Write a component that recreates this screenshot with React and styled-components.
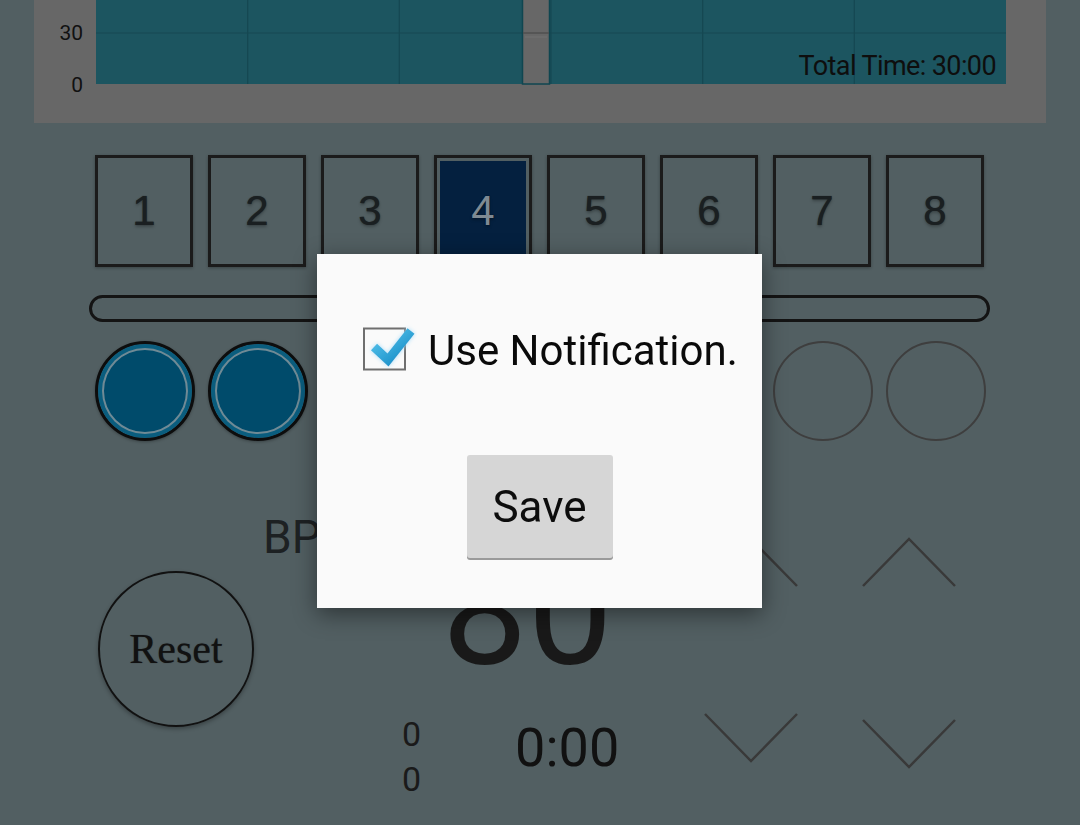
import React from "react";
import styled, { createGlobalStyle } from "styled-components";

const GlobalStyle = createGlobalStyle`
  html, body {
    margin: 0;
    padding: 0;
    background: #525f62;
  }
  body {
    font-family: Roboto, "Noto Sans", "Liberation Sans", sans-serif;
  }
  svg {
    display: block;
  }
`;

const Page = styled.div`
  width: 1080px;
  height: 825px;
  overflow: hidden;
  display: flex;
  flex-direction: column;
  background: #525f62;
`;

// chart (only its lower part is on screen)
const ChartPanel = styled.div`
  position: relative;
  flex-shrink: 0;
  margin: 0 34px;
  height: 123px;
  background: #676767;
`;

const TotalTime = styled.span`
  position: absolute;
  right: 50px;
  top: 50px;
  font-size: 27px;
  line-height: 32px;
  letter-spacing: -0.6px;
  color: #0e0e0e;
`;

const StepRow = styled.div`
  display: flex;
  gap: 15px;
  margin: 32px 0 0 95px;
`;

const StepBox = styled.div`
  box-sizing: border-box;
  width: 98px;
  height: 112px;
  display: flex;
  align-items: center;
  justify-content: center;
  border: 3px solid #1b1b1b;
  padding: 3px;
  background: ${(p) => (p.$active ? "#04203f" : "transparent")};
  background-clip: content-box;
  box-shadow: 0 1px 3px rgba(0, 0, 0, 0.3);
  font-family: "Liberation Sans", Arial, sans-serif;
  font-size: 42px;
  color: ${(p) => (p.$active ? "#7e8a93" : "#1a1f21")};
  text-shadow: 0 0 1px rgba(0, 0, 0, 0.6), 0 2px 3px rgba(0, 0, 0, 0.25);
`;

const Progress = styled.div`
  box-sizing: border-box;
  width: 901px;
  height: 27px;
  margin: 28px 0 0 89px;
  border: 3px solid #141414;
  border-radius: 14px;
`;

const DotRow = styled.div`
  display: flex;
  gap: 13px;
  margin: 19px 0 0 95px;
`;

const Dot = styled.div`
  box-sizing: border-box;
  width: 100px;
  height: 100px;
  border-radius: 50%;
  border: ${(p) => (p.$on ? "3px solid #0d0d0d" : "2px solid #3e3e3e")};
  background: ${(p) => (p.$on ? "#004b6b" : "transparent")};
  box-shadow: ${(p) =>
    p.$on
      ? "inset 0 0 0 4px #0a5d7e, inset 0 0 0 6px #6f8a95, 0 1px 3px rgba(0,0,0,0.3)"
      : "none"};
`;

const Bottom = styled.div`
  display: grid;
  grid-template-columns: 156px 449px 254px;
  align-items: start;
  margin-left: 98px;
`;

const ResetCol = styled.div`
  padding-top: 130px;
`;

const ResetButton = styled.button`
  box-sizing: border-box;
  width: 156px;
  height: 156px;
  border-radius: 50%;
  border: 2.5px solid #111;
  background: transparent;
  box-shadow: 0 2px 4px rgba(0, 0, 0, 0.3);
  font-family: "Liberation Serif", "Times New Roman", serif;
  font-size: 42px;
  color: #111;
  text-shadow: 0 0 1px rgba(0, 0, 0, 0.5);
  padding: 0;
`;

const CenterCol = styled.div`
  display: flex;
  flex-direction: column;
  align-items: flex-start;
`;

const BpmLabel = styled.div`
  margin: 73px 0 0 9px;
  font-size: 46px;
  line-height: 46px;
  color: #1d2123;
`;

const BigValue = styled.div`
  margin: -24px 0 0 188px;
  font-size: 152px;
  line-height: 152px;
  color: #191919;
`;

const LowerRow = styled.div`
  display: flex;
  align-items: flex-start;
  margin: 24px 0 0 148px;
`;

const Counts = styled.div`
  font-size: 34px;
  line-height: 45px;
  color: #1a1a1a;
`;

const Elapsed = styled.div`
  margin: 6px 0 0 94px;
  font-size: 54px;
  line-height: 60px;
  color: #111;
`;

const ChevronGrid = styled.div`
  display: grid;
  grid-template-columns: 96px 96px;
  grid-auto-rows: 52px;
  align-content: start;
  align-items: start;
  column-gap: 62px;
  row-gap: 124px;
  padding-top: 95px;
`;

const ChevronBox = styled.div`
  width: 96px;
  height: 52px;
  margin-top: ${(p) => p.$shift || 0}px;
`;

const Overlay = styled.div`
  position: fixed;
  inset: 0;
  display: flex;
  justify-content: center;
  align-items: flex-start;
  padding-top: 254px;
`;

const Dialog = styled.div`
  box-sizing: border-box;
  width: 445px;
  height: 354px;
  margin-left: -1px;
  background: #fafafa;
  box-shadow: 0 6px 22px rgba(0, 0, 0, 0.45);
  display: flex;
  flex-direction: column;
`;

const CheckRow = styled.label`
  display: flex;
  align-items: flex-start;
  margin: 68px 0 0 46px;
`;

const CheckText = styled.span`
  margin: 5px 0 0 11px;
  font-size: 42px;
  line-height: 48px;
  color: #0a0a0a;
`;

const SaveButton = styled.button`
  align-self: center;
  width: 146px;
  height: 103px;
  margin-top: 80px;
  border: none;
  border-radius: 3px;
  background: #d6d6d6;
  box-shadow: 0 2px 0 #9a9a9a;
  font-family: Roboto, sans-serif;
  font-size: 44px;
  color: #0d0d0d;
  padding: 0;
`;

const GRID_X = [213.7, 365.3, 517, 668.7, 820.3];

function Chart() {
  return (
    <svg width="1012" height="123">
      <rect x="62" y="0" width="910" height="84" fill="#1c5560" />
      {GRID_X.map((x) => (
        <line key={x} x1={x} y1="0" x2={x} y2="84" stroke="#164852" strokeWidth="1.2" />
      ))}
      <line x1="62" y1="33" x2="972" y2="33" stroke="#164852" strokeWidth="1.2" />
      <rect x="488.5" y="-2" width="27" height="86" fill="#676767" stroke="#0f4650" strokeWidth="1.5" />
      <line x1="489" y1="33" x2="515" y2="33" stroke="#4f4f4f" strokeWidth="1.5" />
      <line x1="491" y1="37" x2="513" y2="37" stroke="#737373" strokeWidth="1" />
      <text x="49" y="40" textAnchor="end" fontSize="21" fill="#111" fontFamily="Roboto, sans-serif">
        30
      </text>
      <text x="49" y="92" textAnchor="end" fontSize="21" fill="#111" fontFamily="Roboto, sans-serif">
        0
      </text>
    </svg>
  );
}

function Chevron({ dir }) {
  const points = dir === "up" ? "2,50 48,3 94,50" : "2,2 48,49 94,2";
  return (
    <svg width="96" height="52">
      <polyline points={points} fill="none" stroke="#393939" strokeWidth="2.5" />
    </svg>
  );
}

function CheckIcon() {
  return (
    <svg width="54" height="50">
      <defs>
        <linearGradient id="tick" x1="0" y1="0" x2="1" y2="1">
          <stop offset="0" stopColor="#5ccaf0" />
          <stop offset="1" stopColor="#1188c4" />
        </linearGradient>
        <filter id="glow" x="-30%" y="-30%" width="160%" height="160%">
          <feGaussianBlur stdDeviation="2" result="b" />
          <feFlood floodColor="#a9defa" />
          <feComposite in2="b" operator="in" />
          <feMerge>
            <feMergeNode />
            <feMergeNode in="SourceGraphic" />
          </feMerge>
        </filter>
      </defs>
      <rect x="1" y="6.5" width="41" height="41" fill="none" stroke="#6f6f6f" strokeWidth="2" />
      <polyline
        points="11,25 25,38 48,9"
        fill="none"
        stroke="url(#tick)"
        strokeWidth="9"
        strokeLinejoin="miter"
        filter="url(#glow)"
      />
    </svg>
  );
}

export default function App() {
  const steps = [1, 2, 3, 4, 5, 6, 7, 8];
  return (
    <>
      <GlobalStyle />
      <Page>
        <ChartPanel>
          <Chart />
          <TotalTime>Total Time: 30:00</TotalTime>
        </ChartPanel>

        <StepRow>
          {steps.map((n) => (
            <StepBox key={n} $active={n === 4}>
              {n}
            </StepBox>
          ))}
        </StepRow>

        <Progress />

        <DotRow>
          {steps.map((n) => (
            <Dot key={n} $on={n <= 2} />
          ))}
        </DotRow>

        <Bottom>
          <ResetCol>
            <ResetButton>Reset</ResetButton>
          </ResetCol>
          <CenterCol>
            <BpmLabel>BPM</BpmLabel>
            <BigValue>80</BigValue>
            <LowerRow>
              <Counts>
                0
                <br />0
              </Counts>
              <Elapsed>0:00</Elapsed>
            </LowerRow>
          </CenterCol>
          <ChevronGrid>
            <ChevronBox>
              <Chevron dir="up" />
            </ChevronBox>
            <ChevronBox>
              <Chevron dir="up" />
            </ChevronBox>
            <ChevronBox>
              <Chevron dir="down" />
            </ChevronBox>
            <ChevronBox $shift={6}>
              <Chevron dir="down" />
            </ChevronBox>
          </ChevronGrid>
        </Bottom>
      </Page>

      <Overlay>
        <Dialog>
          <CheckRow>
            <CheckIcon />
            <CheckText>Use Notification.</CheckText>
          </CheckRow>
          <SaveButton>Save</SaveButton>
        </Dialog>
      </Overlay>
    </>
  );
}
